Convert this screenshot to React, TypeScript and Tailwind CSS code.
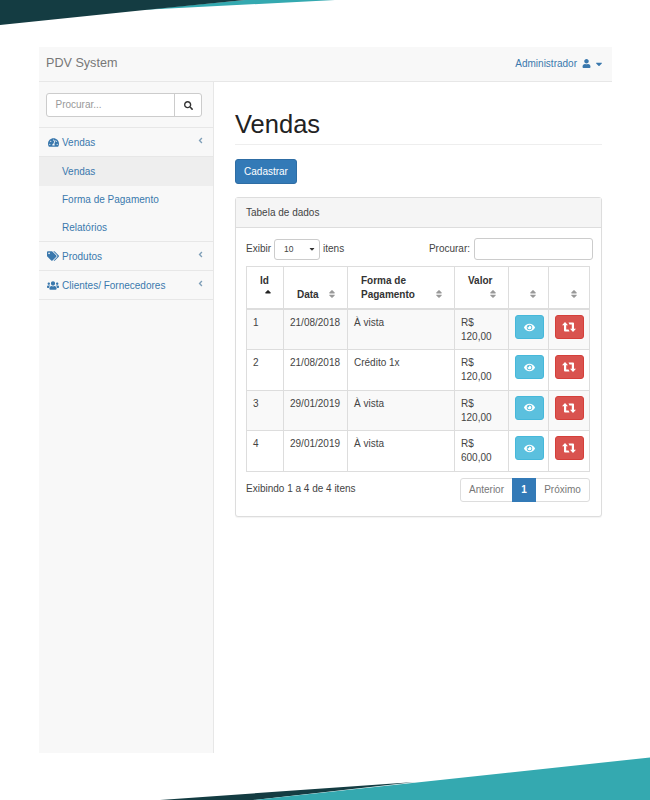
import { FaAngleLeft, FaCaretDown, FaEye, FaSearch, FaSort, FaSortUp, FaTachometerAlt, FaTags, FaUser, FaUsers } from "react-icons/fa";

const rows = [
  ["1", "21/08/2018", "À vista", "120,00"],
  ["2", "21/08/2018", "Crédito 1x", "120,00"],
  ["3", "29/01/2019", "À vista", "120,00"],
  ["4", "29/01/2019", "À vista", "600,00"],
];

function Th({ children, up }: { children?: React.ReactNode; up?: boolean }) {
  return (
    <th className="relative border border-[#ddd] border-b-2 pl-[13px] pr-[20px] pt-[7px] pb-[6px] align-bottom text-left font-bold text-[10px] leading-[14px] text-[#333]">
      {children}
      <span className={up ? "absolute right-[10.5px] bottom-[9px] text-[#222]" : "absolute right-[10.5px] bottom-[9px] text-[#999]"}>
        {up ? <FaSortUp size={10} /> : <FaSort size={10} />}
      </span>
    </th>
  );
}

function MenuRow({ icon, label }: { icon: React.ReactNode; label: string }) {
  return (
    <div className="flex h-[29px] items-center justify-between border-b border-[#e7e7e7] pl-[8px] pr-[8px] text-[#3a78ad]">
      <span className="flex items-center gap-[3px]">
        <span className="flex w-[12px] justify-center">{icon}</span>
        {label}
      </span>
      <FaAngleLeft size={9} className="mb-[3px] text-[#7f9fb8]" />
    </div>
  );
}

function RetweetIcon() {
  return (
    <svg width="14" height="10" viewBox="0 0 14 10" fill="currentColor">
      <path d="M3 0 L6 3.2 H4.2 V7.5 H6.5 L7.5 9.5 H3 a1 1 0 0 1 -1 -1 V3.2 H0 Z M11 10 L8 6.8 H9.8 V2.5 H7.5 L6.5 .5 H11 a1 1 0 0 1 1 1 V6.8 H14 Z" />
    </svg>
  );
}

export default function App() {
  return (
    <div className="relative h-[800px] w-[650px] overflow-hidden bg-white pt-[47px] pl-[39px] font-['Liberation_Sans',Arial,sans-serif] text-[10px] text-[#444]">
      <svg className="absolute left-0 top-0" width="650" height="30" viewBox="0 0 650 30">
        <polygon points="140,10 245,0 335,0" fill="#34a9b0" />
        <polygon points="0,0 245,0 140,10.5 0,25" fill="#143c42" />
      </svg>
      <svg className="absolute bottom-0 left-0" width="650" height="45" viewBox="0 0 650 45">
        <polygon points="160,45 415,27 253,45" fill="#143c42" />
        <polygon points="253,45 650,2.5 650,45" fill="#34a9b0" />
      </svg>

      <div className="flex h-[706px] w-[573px] flex-col">
        <header className="flex h-[35px] shrink-0 items-center justify-between border-b border-[#e7e7e7] bg-[#f8f8f8] pl-[7px] pr-[10px]">
          <span className="mb-[1px] text-[12.6px] text-[#777]">PDV System</span>
          <span className="mb-[1px] flex items-center gap-[5px] text-[#3a78ad]">
            Administrador
            <FaUser size={9} />
            <FaCaretDown size={10} className="-mx-[2px]" />
          </span>
        </header>

        <div className="flex min-h-0 flex-1">
          <aside className="w-[175px] shrink-0 border-r border-[#e7e7e7] bg-[#f8f8f8]">
            <div className="h-[46px] border-b border-[#e7e7e7] pl-[7px] pr-[11px] pt-[11px]">
              <div className="flex h-[24px] rounded-[3px] border border-[#ccc] bg-white">
                <span className="flex flex-1 items-center pb-[1px] pl-[8.5px] text-[#999]">Procurar...</span>
                <span className="flex w-[27px] items-center justify-center border-l border-[#ccc] text-[#333]">
                  <FaSearch size={9} />
                </span>
              </div>
            </div>
            <MenuRow icon={<FaTachometerAlt size={11} />} label="Vendas" />
            <div className="border-b border-[#e7e7e7] text-[#3a78ad]">
              <div className="flex h-[28.5px] items-center bg-[#eeeeee] pl-[23px]">Vendas</div>
              <div className="flex h-[28px] items-center pl-[23px]">Forma de Pagamento</div>
              <div className="flex h-[27.5px] items-center pl-[23px]">Relatórios</div>
            </div>
            <MenuRow icon={<FaTags size={12} />} label="Produtos" />
            <MenuRow icon={<FaUsers size={13} />} label="Clientes/ Fornecedores" />
          </aside>

          <main className="flex-1 pl-[21px] pr-[10px]">
            <h1 className="mt-[27px] border-b border-[#eee] pb-[4px] text-[25.5px] font-normal leading-[31px] text-[#222]">Vendas</h1>
            <button className="mt-[14px] block h-[25px] w-[62px] rounded-[3px] border border-[#2e6da4] bg-[#337ab7] text-[10px] text-white">Cadastrar</button>

            <section className="mt-[13px] h-[320px] w-[367px] rounded-[3px] border border-[#ddd] bg-white shadow-[0_1px_1px_rgba(0,0,0,0.05)]">
              <div className="flex h-[30px] items-center border-b border-[#ddd] bg-[#f5f5f5] pl-[10px]">Tabela de dados</div>
              <div className="pl-[10px] pr-[11px]">
                <div className="-mr-[3px] mt-[10px] flex h-[22px] items-center justify-between">
                  <div className="flex items-center gap-[3px]">
                    <span className="mb-[2px]">Exibir</span>
                    <span className="flex h-[21px] w-[46px] items-center justify-between rounded-[3px] border border-[#ccc] pl-[9px] pr-[3px] text-[8.5px]">
                      10
                      <FaCaretDown size={8} className="text-[#333]" />
                    </span>
                    <span className="mb-[2px]">itens</span>
                  </div>
                  <div className="flex items-center gap-[4px]">
                    <span className="mb-[1px]">Procurar:</span>
                    <span className="h-[22px] w-[119px] rounded-[3px] border border-[#ccc] bg-white" />
                  </div>
                </div>

                <table className="mt-[6px] w-[343px] table-fixed border-collapse">
                  <colgroup>
                    <col className="w-[37px]" />
                    <col className="w-[64px]" />
                    <col className="w-[107px]" />
                    <col className="w-[54px]" />
                    <col className="w-[40px]" />
                    <col className="w-[41px]" />
                  </colgroup>
                  <thead>
                    <tr className="h-[41.5px]">
                      <Th up>Id<br />&nbsp;</Th>
                      <Th>Data</Th>
                      <Th>Forma de Pagamento</Th>
                      <Th>Valor<br />&nbsp;</Th>
                      <Th />
                      <Th />
                    </tr>
                  </thead>
                  <tbody>
                    {rows.map((r, i) => (
                      <tr key={r[0]} className={i % 2 === 0 ? "h-[40.5px] bg-[#f9f9f9]" : "h-[40.5px] bg-white"}>
                        <td className="border border-[#ddd] px-[6px] pt-[6px] align-top leading-[14px]">{r[0]}</td>
                        <td className="border border-[#ddd] px-[6px] pt-[6px] align-top leading-[14px]">{r[1]}</td>
                        <td className="border border-[#ddd] px-[6px] pt-[6px] align-top leading-[14px]">{r[2]}</td>
                        <td className="border border-[#ddd] px-[6px] pt-[6px] align-top leading-[14px]">R$<br />{r[3]}</td>
                        <td className="border border-[#ddd] px-[6px] align-top pt-[5px]">
                          <span className="flex h-[24px] w-[28.5px] items-center justify-center rounded-[3px] border border-[#46b8da] bg-[#5bc0de] text-white"><FaEye size={11} /></span>
                        </td>
                        <td className="border border-[#ddd] px-[6px] align-top pt-[5px]">
                          <span className="flex h-[24px] w-[28.5px] items-center justify-center rounded-[3px] border border-[#d43f3a] bg-[#d9534f] text-white"><RetweetIcon /></span>
                        </td>
                      </tr>
                    ))}
                  </tbody>
                </table>

                <div className="mt-[6px] flex items-start justify-between">
                  <span className="mt-[4px] leading-[14px]">Exibindo 1 a 4 de 4 itens</span>
                  <div className="flex h-[24px] w-[130px] rounded-[3px] border border-[#ddd] text-[#777]">
                    <span className="flex w-[51px] items-center justify-center">Anterior</span>
                    <span className="-my-px flex w-[24px] items-center justify-center bg-[#337ab7] font-bold text-white">1</span>
                    <span className="flex flex-1 items-center justify-center">Próximo</span>
                  </div>
                </div>
              </div>
            </section>
          </main>
        </div>
      </div>
    </div>
  );
}
